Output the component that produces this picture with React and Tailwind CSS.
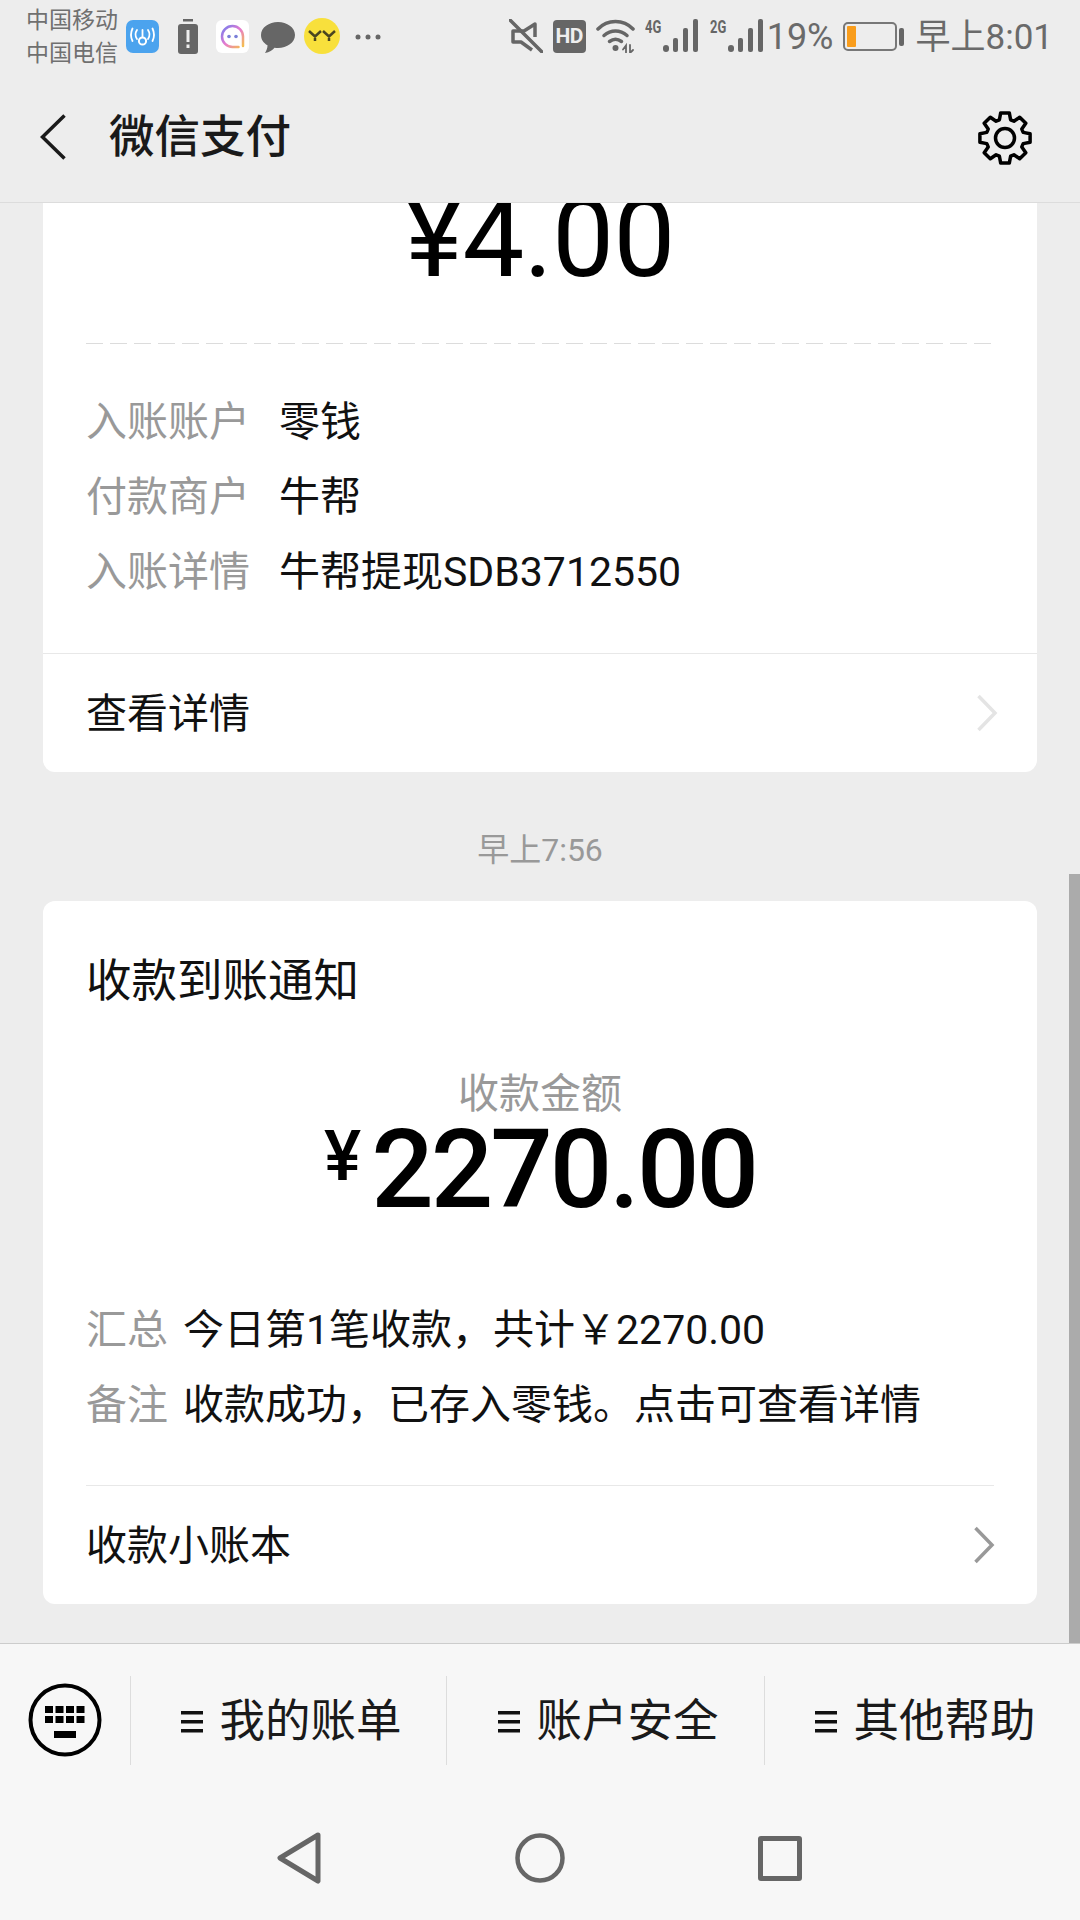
const font = "font-['Roboto','Noto_Sans_CJK_SC',sans-serif]";

function gearPath() {
  // 8 teeth, rounded through stroke joins
  const cx = 30, cy = 30, pts = [];
  for (let i = 0; i < 8; i++) {
    const a = (i * Math.PI) / 4 - Math.PI / 2;
    const spread = [[-0.3, 19], [-0.17, 25.5], [0.17, 25.5], [0.3, 19]];
    spread.forEach(([d, r]) => {
      pts.push(`${(cx + r * Math.cos(a + d)).toFixed(1)} ${(cy + r * Math.sin(a + d)).toFixed(1)}`);
    });
  }
  return "M" + pts.join("L") + "Z";
}

function Signal({ label }) {
  return (
    <div className="relative w-[53px] h-[34px]">
      <span className="absolute left-0 -top-[1px] text-[18px] font-bold leading-[18px] text-[#666] scale-x-[0.72] origin-left">{label}</span>
      <svg className="absolute left-[18px] top-0" width="35" height="34" viewBox="0 0 35 34" fill="#666">
        <rect x="0" y="26" width="6" height="7" rx="3" />
        <rect x="10" y="19" width="5" height="14" rx="2" />
        <rect x="20" y="9" width="5" height="24" rx="2" />
        <rect x="30" y="0" width="5" height="33" rx="2" />
      </svg>
    </div>
  );
}

function StatusBar() {
  return (
    <div className="h-[72px] flex items-start justify-between text-[#666]">
      <div className="flex items-start pl-[26px] pt-[8px]">
        <div className="w-[93px] -mt-[4px] text-[23px] leading-[33px] text-[#707070]">
          <div>中国移动</div>
          <div>中国电信</div>
        </div>
        {/* app notification icons */}
        <svg className="ml-[7px] mt-[12px]" width="33" height="33" viewBox="0 0 33 33">
          <rect width="33" height="33" rx="7" fill="#4ba3ee" />
          <circle cx="16.5" cy="21" r="3.6" fill="none" stroke="#fff" strokeWidth="2" />
          <path d="M16.5 17V10M11 10q-3 4.500 0 9M22 10q3 4.500 0 9M6.500 8.500q-3 6.500 0 12.500M26.500 8.500q3 6.500 0 12.500" fill="none" stroke="#fff" strokeWidth="1.800" strokeLinecap="round" />
        </svg>
        <svg className="ml-[19px] mt-[11px]" width="20" height="35" viewBox="0 0 20 35">
          <rect x="5" y="0" width="10" height="2.500" fill="#666" />
          <rect x="0" y="5" width="20" height="30" rx="3" fill="#666" />
          <rect x="8.500" y="11" width="3" height="12" fill="#eee" />
          <rect x="8.500" y="25.500" width="3" height="3.500" fill="#eee" />
        </svg>
        <svg className="ml-[18px] mt-[12px]" width="33" height="33" viewBox="0 0 33 33">
          <defs>
            <linearGradient id="ring" x1="0" y1="0" x2="1" y2="1">
              <stop offset="0" stopColor="#6f7df0" />
              <stop offset="0.5" stopColor="#e77ad0" />
              <stop offset="1" stopColor="#f5c04a" />
            </linearGradient>
          </defs>
          <rect width="33" height="33" rx="6" fill="#fff" />
          <path d="M27 26V16.500a10.500 10.500 0 1 0-10.500 10.500h6" fill="none" stroke="url(#ring)" strokeWidth="2.500" strokeLinecap="round" />
          <circle cx="13" cy="16.500" r="1.800" fill="#7a7fd8" />
          <circle cx="20" cy="16.500" r="1.800" fill="#7a7fd8" />
        </svg>
        <svg className="ml-[12px] mt-[13px]" width="34" height="33" viewBox="0 0 34 33">
          <path d="M17 1C8 1 0 6.500 0 14c0 4.500 2.500 8 6.500 10.300 0 2.500-.8 5-2.500 7.700 4.500-.8 7.500-2.800 9.500-5.200 1.200.1 2.300.2 3.500.2 9 0 17-5.500 17-13S26 1 17 1z" fill="#666" />
        </svg>
        <div className="ml-[9px] mt-[10px] w-[36px] h-[36px] rounded-full bg-[#f8e03c] flex items-center justify-center">
          <svg width="28" height="12" viewBox="0 0 28 12" fill="none" stroke="#4a4520" strokeWidth="2.500">
            <path d="M1 1l6 5.500L13 1M7 6.500V11M15 1l6 5.500L27 1M21 6.500V11" />
          </svg>
        </div>
        <svg className="ml-[15px] mt-[25px]" width="26" height="8" viewBox="0 0 26 8" fill="#666">
          <circle cx="3" cy="4" r="2.500" />
          <circle cx="13" cy="4" r="2.500" />
          <circle cx="23" cy="4" r="2.500" />
        </svg>
      </div>
      <div className="flex items-start pr-[27px] pt-[19px]">
        {/* mute */}
        <svg width="34" height="34" viewBox="0 0 34 34" fill="none" stroke="#666" strokeWidth="3.500">
          <path d="M26 18V5L15 12H4v11h8l11 8" strokeLinejoin="round" />
          <path d="M1 1 33 33" strokeLinecap="round" />
        </svg>
        <div className="ml-[10px] mt-[1px] w-[33px] h-[33px] rounded-[4px] bg-[#666] text-[#eee] text-[21px] font-bold leading-[33px] text-center tracking-[-0.5px]">HD</div>
        <svg className="ml-[10px]" width="39" height="34" viewBox="0 0 39 34" fill="none" stroke="#666" strokeWidth="3.500" strokeLinecap="round">
          <path d="M2 10C11.500 0 27.500 0 37 10" />
          <path d="M8 16.500c7-6 16-6 23 0" />
          <path d="M13.500 22.500c4-3 8-3 12 0" />
          <circle cx="19.500" cy="29" r="3" fill="#666" stroke="none" />
          <path d="M27 30.500l3-4v7M34 26v8l3-3" strokeWidth="1.800" />
        </svg>
        <div className="ml-[10px]"><Signal label="4G" /></div>
        <div className="ml-[12px]"><Signal label="2G" /></div>
        <span className="ml-[4px] mt-[1px] text-[36px] leading-[34px] text-[#6a6a6a]">19%</span>
        <div className="ml-[9px] mt-[3px] flex items-center">
          <div className="w-[54px] h-[29px] rounded-[5px] border-2 border-[#777] p-[2px]">
            <div className="w-[9px] h-full rounded-[1px] bg-[#f99d1c]" />
          </div>
          <div className="ml-[2px] w-[5px] h-[18px] rounded-[2px] bg-[#666]" />
        </div>
        <span className="ml-[12px] text-[35px] leading-[38px] text-[#6a6a6a]">早上8:01</span>
      </div>
    </div>
  );
}

function NavBar() {
  return (
    <div className="h-[130px] flex items-center justify-between pl-[40px] pr-[45px]">
      <div className="flex items-center">
        <svg width="26" height="46" viewBox="0 0 26 46" fill="none" stroke="#1a1a1a" strokeWidth="3.500">
          <path d="M24.500 1.500 2.500 23l22 21.500" />
        </svg>
        <span className="ml-[43px] pt-[1px] text-[45.500px] leading-[56px] text-[#1a1a1a] font-medium">微信支付</span>
      </div>
      <svg className="mt-[1px]" width="60" height="60" viewBox="0 0 60 60" fill="none" stroke="#000" strokeWidth="3.500" strokeLinejoin="round">
        <path d={gearPath()} />
        <circle cx="30" cy="30" r="9.500" />
      </svg>
    </div>
  );
}

function InfoRow({ label, value, labelWidth, gap }) {
  return (
    <div className="flex h-[75px] items-center text-[41px] leading-[75px] whitespace-nowrap">
      <span className="text-[#999] shrink-0" style={{ width: labelWidth, marginRight: gap }}>{label}</span>
      <span className="text-[#111]">{value}</span>
    </div>
  );
}

function LinkRow({ label, chevron }) {
  return (
    <div className="h-[118px] flex items-center justify-between text-[41px] text-[#111]">
      <span className="mt-[3px]">{label}</span>
      <svg width="22" height="38" viewBox="0 0 22 38" fill="none" stroke={chevron} strokeWidth="3.500" className="mr-[-1px]">
        <path d="M2.500 2 19 19 2.500 36" />
      </svg>
    </div>
  );
}

function Content() {
  return (
    <div className="relative flex-1 overflow-hidden px-[43px]">
      {/* first notification, scrolled under the header */}
      <div className="-mt-[19px] bg-white rounded-[12px] overflow-hidden">
        <div className="text-center text-[110px] leading-[110px] font-normal text-black tracking-[-0.5px]">¥4.00</div>
        <div className="mx-[43px] mt-[49px] h-[1px] bg-[repeating-linear-gradient(90deg,#dcdcdc_0,#dcdcdc_17px,transparent_17px,transparent_24px)]" />
        <div className="mt-[41px] px-[43px]">
          <InfoRow label="入账账户" value="零钱" labelWidth={164} gap={29} />
          <InfoRow label="付款商户" value="牛帮" labelWidth={164} gap={29} />
          <InfoRow label="入账详情" value="牛帮提现SDB3712550" labelWidth={164} gap={29} />
        </div>
        <div className="mt-[43px] border-t border-[#e8e8e8] px-[43px] pr-[40px]">
          <LinkRow label="查看详情" chevron="#e4e4e4" />
        </div>
      </div>

      <div className="mt-[56px] text-center text-[32px] leading-[44px] text-[#999]">早上7:56</div>

      <div className="mt-[29px] bg-white rounded-[12px] px-[43px] pt-[58px]">
        <div className="text-[45.500px] leading-[46px] text-[#111]">收款到账通知</div>
        <div className="mt-[65px] text-center text-[41px] leading-[48px] text-[#999]">收款金额</div>
        <div className="-mt-[3px] flex justify-center items-start">
          <span className="text-[70px] leading-[70px] font-medium text-black mr-[10px] mt-[6px]">¥</span>
          <span className="text-[110px] leading-[110px] font-medium text-black tracking-[-3px]">2270.00</span>
        </div>
        <div className="mt-[68px]">
          <InfoRow label="汇总" value="今日第1笔收款，共计￥2270.00" labelWidth={82} gap={15} />
          <InfoRow label="备注" value="收款成功，已存入零钱。点击可查看详情" labelWidth={82} gap={15} />
        </div>
        <div className="mt-[42px] border-t border-[#e8e8e8]">
          <LinkRow label="收款小账本" chevron="#999" />
        </div>
      </div>

      {/* scroll indicator */}
      <div className="absolute right-0 top-[671px] bottom-0 w-[11px] bg-[#ababab]" />
    </div>
  );
}

function MenuItem({ label }) {
  return (
    <div className="flex items-center justify-center border-l border-[#ddd] pl-[6px] text-[45.500px] leading-[86px] text-[#1a1a1a]">
      <svg className="mr-[16px] mt-[3px]" width="22" height="22" viewBox="0 0 22 22" fill="#111">
        <rect y="0" width="22" height="3.500" />
        <rect y="9" width="22" height="3.500" />
        <rect y="18" width="22" height="3.500" />
      </svg>
      <span className="pt-[3px]">{label}</span>
    </div>
  );
}

function BottomBar() {
  return (
    <div className="h-[277px] shrink-0 border-t border-[#ccc] bg-[#f7f7f7]">
      <div className="mt-[32px] h-[86px] grid grid-cols-[130px_316px_318px_316px]">
        <div className="flex items-center justify-center">
          <svg className="-mt-[1px]" width="74" height="74" viewBox="0 0 74 74">
            <circle cx="37" cy="37" r="34.500" fill="none" stroke="#000" strokeWidth="4" />
            <g fill="#000">
              <rect x="17" y="23" width="8" height="7" /><rect x="27.500" y="23" width="8" height="7" /><rect x="38" y="23" width="8" height="7" /><rect x="48.500" y="23" width="8" height="7" />
              <rect x="17" y="33" width="8" height="7" /><rect x="27.500" y="33" width="8" height="7" /><rect x="38" y="33" width="8" height="7" /><rect x="48.500" y="33" width="8" height="7" />
              <rect x="26" y="48" width="22" height="7" />
            </g>
          </svg>
        </div>
        <MenuItem label="我的账单" />
        <MenuItem label="账户安全" />
        <MenuItem label="其他帮助" />
      </div>
      <div className="mt-[70px] flex items-center pl-[276px]">
        <svg width="46" height="52" viewBox="0 0 46 52" fill="none" stroke="#666" strokeWidth="5" strokeLinejoin="round">
          <path d="M42 3 4 26l38 23z" />
        </svg>
        <svg className="ml-[193px]" width="50" height="50" viewBox="0 0 50 50" fill="none" stroke="#666" strokeWidth="4.500">
          <circle cx="25" cy="25" r="22.500" />
        </svg>
        <div className="ml-[193px] w-[44px] h-[45px] rounded-[3px] border-[5px] border-[#666]" />
      </div>
    </div>
  );
}

export default function App() {
  return (
    <div className={`${font} relative w-[1080px] h-[1920px] overflow-hidden flex flex-col bg-[#ededed]`}>
      <div className="shrink-0 h-[203px] border-b border-[#dcdcdc] relative z-10 bg-[#ededed]">
        <StatusBar />
        <NavBar />
      </div>
      <Content />
      <BottomBar />
    </div>
  );
}
